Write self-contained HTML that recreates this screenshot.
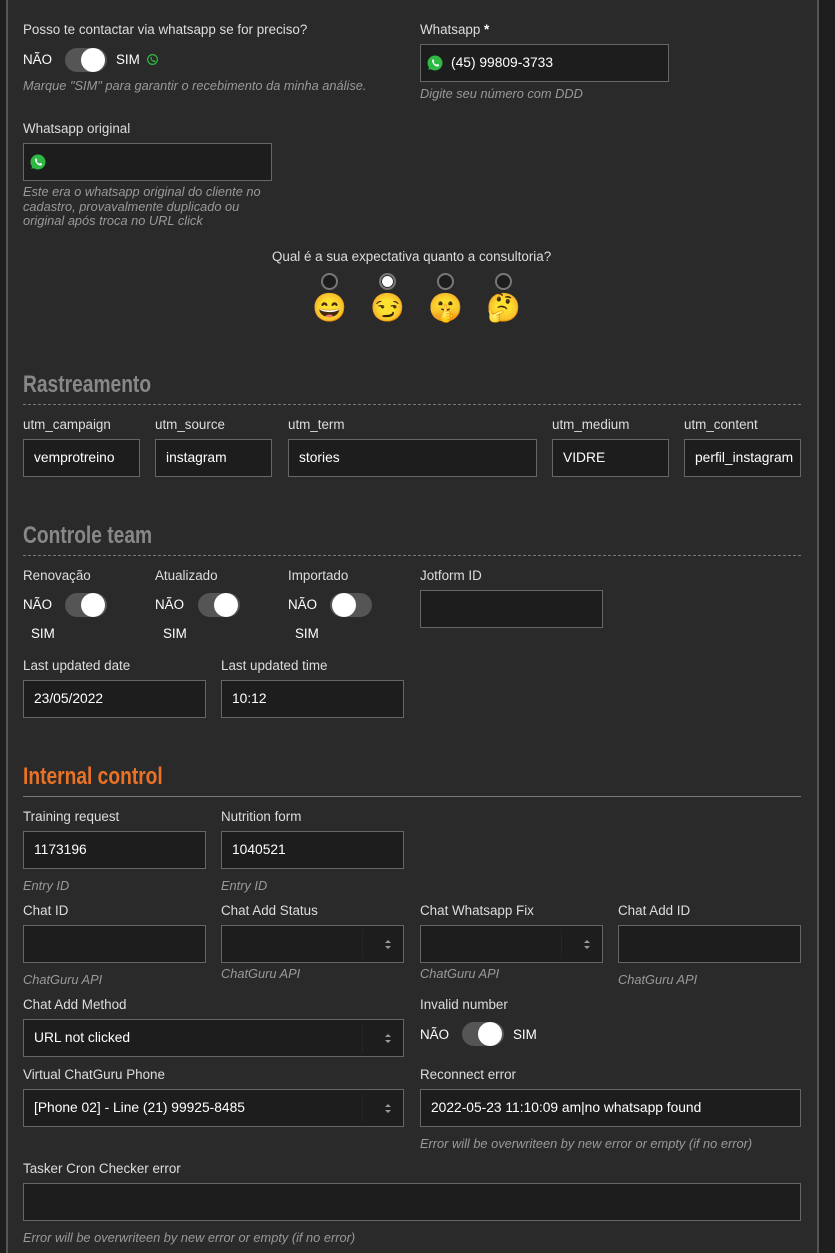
<!DOCTYPE html>
<html><head><meta charset="utf-8"><style>
*{box-sizing:border-box;margin:0;padding:0}
body{width:835px;height:1253px;background:#1e1e1e;position:relative;overflow:hidden;font-family:"Liberation Sans",sans-serif;font-size:13.4px;color:#ddd}
#p{position:absolute;left:6px;top:0;width:813px;height:1253px;background:#2a2a2a;border-left:2px solid #555;border-right:2px solid #555}
.a{position:absolute;line-height:16px;white-space:nowrap}
.l{color:#ddd}
.h{color:#999;font-style:italic;font-size:12.8px}
.i{position:absolute;background:#1d1d1d;border:1px solid #666;height:38px;color:#fff;line-height:36px;padding-left:10px;overflow:hidden;white-space:nowrap;font-size:13.8px}
.sel:after{content:"";position:absolute;right:12px;top:14px;width:0;height:0;border-left:3px solid transparent;border-right:3px solid transparent;border-bottom:3px solid #999}
.sel:before{content:"";position:absolute;right:12px;top:20px;width:0;height:0;border-left:3px solid transparent;border-right:3px solid transparent;border-top:3px solid #999}
.sep{position:absolute;right:40px;top:4px;bottom:4px;border-left:1px solid #262626}
.t{position:absolute;width:42px;height:24px;border-radius:12px;background:#555}
.t b{position:absolute;top:0;width:24px;height:24px;border-radius:50%;background:#fff;right:2px}
.t.off b{left:2px;right:auto}
.w{color:#fff}
.st{position:absolute;left:23px;font-family:"Liberation Sans Narrow","Liberation Sans",sans-serif;font-weight:bold;font-size:24px;color:#888;transform:scaleX(.8);transform-origin:left;line-height:28px}
.r{position:absolute;width:17px;height:17px;border-radius:50%;border:2px solid #777;background:#1d1d1d}
.e{position:absolute;font-size:28px;line-height:32px;font-family:"Noto Color Emoji","DejaVu Sans",sans-serif}
</style></head><body>
<div id="p"></div>
<svg width="0" height="0" style="position:absolute"><defs><symbol id="wa" viewBox="0 0 24 24"><circle cx="12" cy="12" r="10" fill="#2fb844"/><path d="M3 21l1.5-4.5L8 20z" fill="#2fb844"/><path d="M8.5 7.5c.5-.6 1.3-.6 1.6 0l.8 1.8c.2.4 0 .8-.4 1.2-.3.3-.2.6 0 1 .7 1.1 1.6 2 2.8 2.6.4.2.7.1 1-.3.4-.5.8-.6 1.2-.4l1.7.9c.5.3.5 1 0 1.6-.8.9-2 1.2-3.4.6-2.3-1-4.1-2.8-5.2-5-.6-1.3-.5-3.1-.1-4z" fill="#fff"/></symbol></defs></svg>

<div class="a l" style="left:23px;top:22px">Posso te contactar via whatsapp se for preciso?</div>
<div class="a w" style="left:23px;top:52px">NÃO</div>
<div class="t" style="left:65px;top:48px"><b></b></div>
<div class="a w" style="left:116px;top:52px">SIM</div>
<svg style="position:absolute;left:146px;top:53px" width="13" height="13" viewBox="0 0 24 24"><circle cx="12" cy="12" r="9" fill="none" stroke="#2fb844" stroke-width="2.2"/><path d="M8.5 7.5c.5-.6 1.3-.6 1.6 0l.8 1.8c.2.4 0 .8-.4 1.2-.3.3-.2.6 0 1 .7 1.1 1.6 2 2.8 2.6.4.2.7.1 1-.3.4-.5.8-.6 1.2-.4l1.7.9c.5.3.5 1 0 1.6-.8.9-2 1.2-3.4.6-2.3-1-4.1-2.8-5.2-5-.6-1.3-.5-3.1-.1-4z" fill="#2fb844"/></svg>
<div class="a h" style="left:23px;top:78px">Marque "SIM" para garantir o recebimento da minha análise.</div>

<div class="a l" style="left:420px;top:22px">Whatsapp <b style="color:#fff">*</b></div>
<div class="i" style="left:420px;top:44px;width:249px;padding-left:30px">(45) 99809-3733</div>
<svg style="position:absolute;left:426px;top:54px" width="18" height="18"><use href="#wa"/></svg>
<div class="a h" style="left:420px;top:86px">Digite seu número com DDD</div>

<div class="a l" style="left:23px;top:121px">Whatsapp original</div>
<div class="i" style="left:23px;top:143px;width:249px"></div>
<svg style="position:absolute;left:29px;top:153px" width="18" height="18"><use href="#wa"/></svg>
<div class="a h" style="left:23px;top:185px;line-height:14.6px">Este era o whatsapp original do cliente no<br>cadastro, provavalmente duplicado ou<br>original após troca no URL click</div>

<div class="a l" style="left:272px;top:249px">Qual é a sua expectativa quanto a consultoria?</div>
<div class="r" style="left:321px;top:273px"></div>
<div class="r" style="left:379px;top:273px;background:#fff;box-shadow:inset 0 0 0 1px #1d1d1d"></div>
<div class="r" style="left:437px;top:273px"></div>
<div class="r" style="left:495px;top:273px"></div>
<div class="e" style="left:312px;top:292px">😄</div>
<div class="e" style="left:370px;top:292px">😏</div>
<div class="e" style="left:428px;top:292px">🤫</div>
<div class="e" style="left:486px;top:292px">🤔</div>

<div class="st" style="top:371px">Rastreamento</div>
<div style="position:absolute;left:23px;top:404px;width:778px;border-top:1px dashed #777"></div>
<div class="a l" style="left:23px;top:417px">utm_campaign</div>
<div class="a l" style="left:155px;top:417px">utm_source</div>
<div class="a l" style="left:288px;top:417px">utm_term</div>
<div class="a l" style="left:552px;top:417px">utm_medium</div>
<div class="a l" style="left:684px;top:417px">utm_content</div>
<div class="i" style="left:23px;top:439px;width:117px">vemprotreino</div>
<div class="i" style="left:155px;top:439px;width:117px">instagram</div>
<div class="i" style="left:288px;top:439px;width:249px">stories</div>
<div class="i" style="left:552px;top:439px;width:117px">VIDRE</div>
<div class="i" style="left:684px;top:439px;width:117px">perfil_instagram</div>

<div class="st" style="top:522px">Controle team</div>
<div style="position:absolute;left:23px;top:555px;width:778px;border-top:1px dashed #777"></div>
<div class="a l" style="left:23px;top:568px">Renovação</div>
<div class="a l" style="left:155px;top:568px">Atualizado</div>
<div class="a l" style="left:288px;top:568px">Importado</div>
<div class="a l" style="left:420px;top:568px">Jotform ID</div>
<div class="a w" style="left:23px;top:597px">NÃO</div>
<div class="t" style="left:65px;top:593px"><b></b></div>
<div class="a w" style="left:155px;top:597px">NÃO</div>
<div class="t" style="left:198px;top:593px"><b></b></div>
<div class="a w" style="left:288px;top:597px">NÃO</div>
<div class="t off" style="left:330px;top:593px"><b></b></div>
<div class="a w" style="left:31px;top:626px">SIM</div>
<div class="a w" style="left:163px;top:626px">SIM</div>
<div class="a w" style="left:295px;top:626px">SIM</div>
<div class="i" style="left:420px;top:590px;width:183px"></div>
<div class="a l" style="left:23px;top:658px">Last updated date</div>
<div class="a l" style="left:221px;top:658px">Last updated time</div>
<div class="i" style="left:23px;top:680px;width:183px">23/05/2022</div>
<div class="i" style="left:221px;top:680px;width:183px">10:12</div>

<div class="st" style="top:763px;color:#ea7226">Internal control</div>
<div style="position:absolute;left:23px;top:796px;width:778px;border-top:1px solid #777"></div>
<div class="a l" style="left:23px;top:809px">Training request</div>
<div class="a l" style="left:221px;top:809px">Nutrition form</div>
<div class="i" style="left:23px;top:831px;width:183px">1173196</div>
<div class="i" style="left:221px;top:831px;width:183px">1040521</div>
<div class="a h" style="left:23px;top:878px">Entry ID</div>
<div class="a h" style="left:221px;top:878px">Entry ID</div>

<div class="a l" style="left:23px;top:903px">Chat ID</div>
<div class="a l" style="left:221px;top:903px">Chat Add Status</div>
<div class="a l" style="left:420px;top:903px">Chat Whatsapp Fix</div>
<div class="a l" style="left:618px;top:903px">Chat Add ID</div>
<div class="i" style="left:23px;top:925px;width:183px"></div>
<div class="i sel" style="left:221px;top:925px;width:183px"><span class="sep"></span></div>
<div class="i sel" style="left:420px;top:925px;width:183px"><span class="sep"></span></div>
<div class="i" style="left:618px;top:925px;width:183px"></div>
<div class="a h" style="left:23px;top:972px">ChatGuru API</div>
<div class="a h" style="left:221px;top:966px">ChatGuru API</div>
<div class="a h" style="left:420px;top:966px">ChatGuru API</div>
<div class="a h" style="left:618px;top:972px">ChatGuru API</div>

<div class="a l" style="left:23px;top:997px">Chat Add Method</div>
<div class="i sel" style="left:23px;top:1019px;width:381px">URL not clicked<span class="sep"></span></div>
<div class="a l" style="left:420px;top:997px">Invalid number</div>
<div class="a w" style="left:420px;top:1027px">NÃO</div>
<div class="t" style="left:462px;top:1022px"><b></b></div>
<div class="a w" style="left:513px;top:1027px">SIM</div>

<div class="a l" style="left:23px;top:1067px">Virtual ChatGuru Phone</div>
<div class="i sel" style="left:23px;top:1089px;width:381px">[Phone 02] - Line (21) 99925-8485<span class="sep"></span></div>
<div class="a l" style="left:420px;top:1067px">Reconnect error</div>
<div class="i" style="left:420px;top:1089px;width:381px">2022-05-23 11:10:09 am|no whatsapp found</div>
<div class="a h" style="left:420px;top:1136px">Error will be overwriteen by new error or empty (if no error)</div>

<div class="a l" style="left:23px;top:1161px">Tasker Cron Checker error</div>
<div class="i" style="left:23px;top:1183px;width:778px"></div>
<div class="a h" style="left:23px;top:1230px">Error will be overwriteen by new error or empty (if no error)</div>
</body></html>
